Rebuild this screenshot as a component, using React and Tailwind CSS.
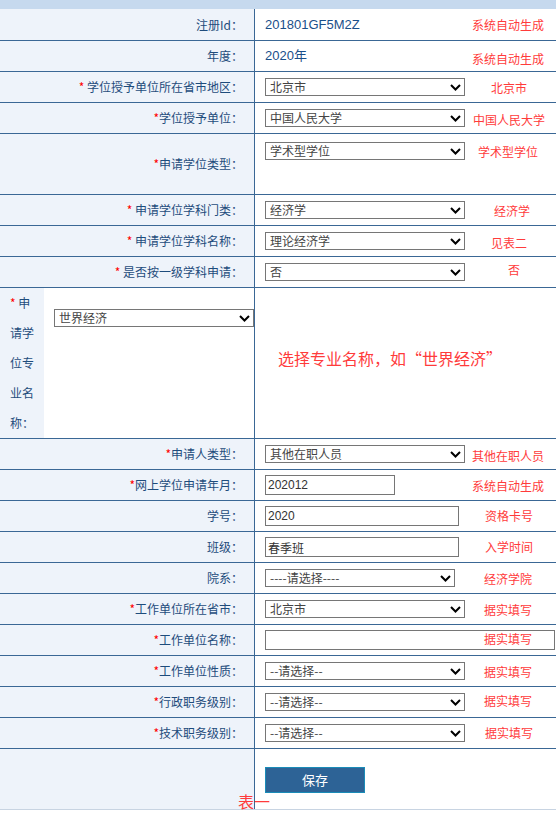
import React from 'react';

const Star = () => <span className="text-[#ff0000]">*</span>;

function Chevron() {
  return (
    <svg width="11" height="7" viewBox="0 0 11 7" className="shrink-0">
      <path d="M1 1L5.5 5.5L10 1" stroke="#000" strokeWidth="2" fill="none" />
    </svg>
  );
}

function Sel({ w = 'w-[200px]', text }) {
  return (
    <div className={`${w} h-[18px] border border-[#767676] bg-white flex items-center justify-between pl-[4px] pr-[3px] text-[12px] leading-[16px] text-[#444] shrink-0`}>
      <span>{text}</span>
      <Chevron />
    </div>
  );
}

function Inp({ w, value }) {
  return (
    <input
      readOnly
      value={value}
      className={`${w} h-[20px] border border-[#767676] bg-white px-[2px] text-[12px] text-[#333] font-['Liberation_Sans','Noto_Sans_CJK_SC',sans-serif] outline-none shrink-0`}
    />
  );
}

function Red({ children, cls = '' }) {
  return (
    <span className={`text-[12px] leading-[16px] text-[#ff3b3b] whitespace-nowrap ${cls}`}>{children}</span>
  );
}

function Row({ h = 'h-[31px]', label, children, rightCls = 'items-center', extra = null }) {
  return (
    <div className={`relative flex ${h} border-b border-[#3a6795]`}>
      <div className="w-[255px] shrink-0 border-r border-[#3a6795] bg-[#eef3fa] flex items-center justify-end pr-[11px] text-[12px] text-[#1e4c7c]">
        <span>{label}</span>
      </div>
      <div className={`flex-1 flex pl-[10px] ${rightCls}`}>{children}</div>
      {extra}
    </div>
  );
}

export default function App() {
  return (
    <div className="w-[556px] h-[816px] bg-white font-['Noto_Sans_CJK_SC',sans-serif] overflow-hidden">
      <div className="h-[9px] bg-[#c6d9ee]" />
      <Row h="h-[32px]" label="注册Id：">
        <span className="w-[207px] text-[13px] text-[#1a4f8a] font-['Liberation_Sans','Noto_Sans_CJK_SC',sans-serif]">201801GF5M2Z</span>
        <Red>系统自动生成</Red>
      </Row>
      <Row label="年度：">
        <span className="w-[207px] text-[13px] text-[#1a4f8a] font-['Liberation_Sans','Noto_Sans_CJK_SC',sans-serif]">2020年</span>
        <Red cls="pt-[6px]">系统自动生成</Red>
      </Row>
      <Row label={<><Star /> 学位授予单位所在省市地区：</>}>
        <Sel text="北京市" />
        <Red cls="ml-[26px] pt-[2px]">北京市</Red>
      </Row>
      <Row label={<><Star />学位授予单位：</>}>
        <Sel text="中国人民大学" />
        <Red cls="ml-[8px] pt-[4px]">中国人民大学</Red>
      </Row>
      <Row h="h-[61px]" label={<><Star />申请学位类型：</>} rightCls="items-start">
        <div className="mt-[8px]"><Sel text="学术型学位" /></div>
        <Red cls="ml-[13px] mt-[10px]">学术型学位</Red>
      </Row>
      <Row label={<><Star /> 申请学位学科门类：</>}>
        <Sel text="经济学" />
        <Red cls="ml-[29px] pt-[2px]">经济学</Red>
      </Row>
      <Row label={<><Star /> 申请学位学科名称：</>}>
        <Sel text="理论经济学" />
        <Red cls="ml-[26px] pt-[4px]">见表二</Red>
      </Row>
      <Row label={<><Star /> 是否按一级学科申请：</>}>
        <Sel text="否" />
        <Red cls="ml-[43px] pb-[4px]">否</Red>
      </Row>

      <div className="flex h-[151px] border-b border-[#3a6795]">
        <div className="w-[44px] shrink-0 bg-[#eef3fa] pl-[10px] pr-[8px] text-[12px] leading-[30px] text-[#1e4c7c]">
          <Star /> 申请学位专业名称：
        </div>
        <div className="w-[211px] shrink-0 border-r border-[#3a6795] pl-[10px] pt-[21px]">
          <Sel text="世界经济" />
        </div>
        <div className="flex-1 pl-[23px] pt-[58px]">
          <span className="text-[16px] leading-[22px] text-[#ff3b3b] whitespace-nowrap">选择专业名称，如“世界经济”</span>
        </div>
      </div>

      <Row label={<><Star />申请人类型：</>}>
        <Sel text="其他在职人员" />
        <Red cls="ml-[7px] pt-[4px]">其他在职人员</Red>
      </Row>
      <Row label={<><Star />网上学位申请年月：</>}>
        <Inp w="w-[130px]" value="202012" />
        <Red cls="ml-[77px] pt-[2px]">系统自动生成</Red>
      </Row>
      <Row label="学号：">
        <Inp w="w-[194px]" value="2020" />
        <Red cls="ml-[26px]">资格卡号</Red>
      </Row>
      <Row label="班级：">
        <Inp w="w-[194px]" value="春季班" />
        <Red cls="ml-[26px]">入学时间</Red>
      </Row>
      <Row label="院系：">
        <Sel w="w-[190px]" text="----请选择----" />
        <Red cls="ml-[29px] pt-[2px]">经济学院</Red>
      </Row>
      <Row label={<><Star />工作单位所在省市：</>}>
        <Sel text="北京市" />
        <Red cls="ml-[19px] pt-[2px]">据实填写</Red>
      </Row>
      <Row
        label={<><Star />工作单位名称：</>}
        extra={<Red cls="absolute left-[484px] top-[6px]">据实填写</Red>}
      >
        <Inp w="w-[290px]" value="" />
      </Row>
      <Row label={<><Star />工作单位性质：</>}>
        <Sel text="--请选择--" />
        <Red cls="ml-[19px] pt-[2px]">据实填写</Red>
      </Row>
      <Row label={<><Star />行政职务级别：</>}>
        <Sel text="--请选择--" />
        <Red cls="ml-[19px] pb-[2px]">据实填写</Red>
      </Row>
      <Row label={<><Star />技术职务级别：</>}>
        <Sel text="--请选择--" />
        <Red cls="ml-[20px]">据实填写</Red>
      </Row>

      <div className="relative flex h-[61px] border-b border-[#c8d4e2]">
        <div className="w-[255px] shrink-0 border-r border-[#3a6795] bg-[#eef3fa]" />
        <div className="flex-1 pl-[10px] pt-[17px]">
          <button className="w-[100px] h-[26px] bg-[#2d6396] border border-[#1a8cb8] text-white text-[13px]">保存</button>
        </div>
        <span className="absolute left-[238px] top-[44px] text-[16px] leading-[16px] text-[#ff3b3b]">表一</span>
      </div>
    </div>
  );
}
